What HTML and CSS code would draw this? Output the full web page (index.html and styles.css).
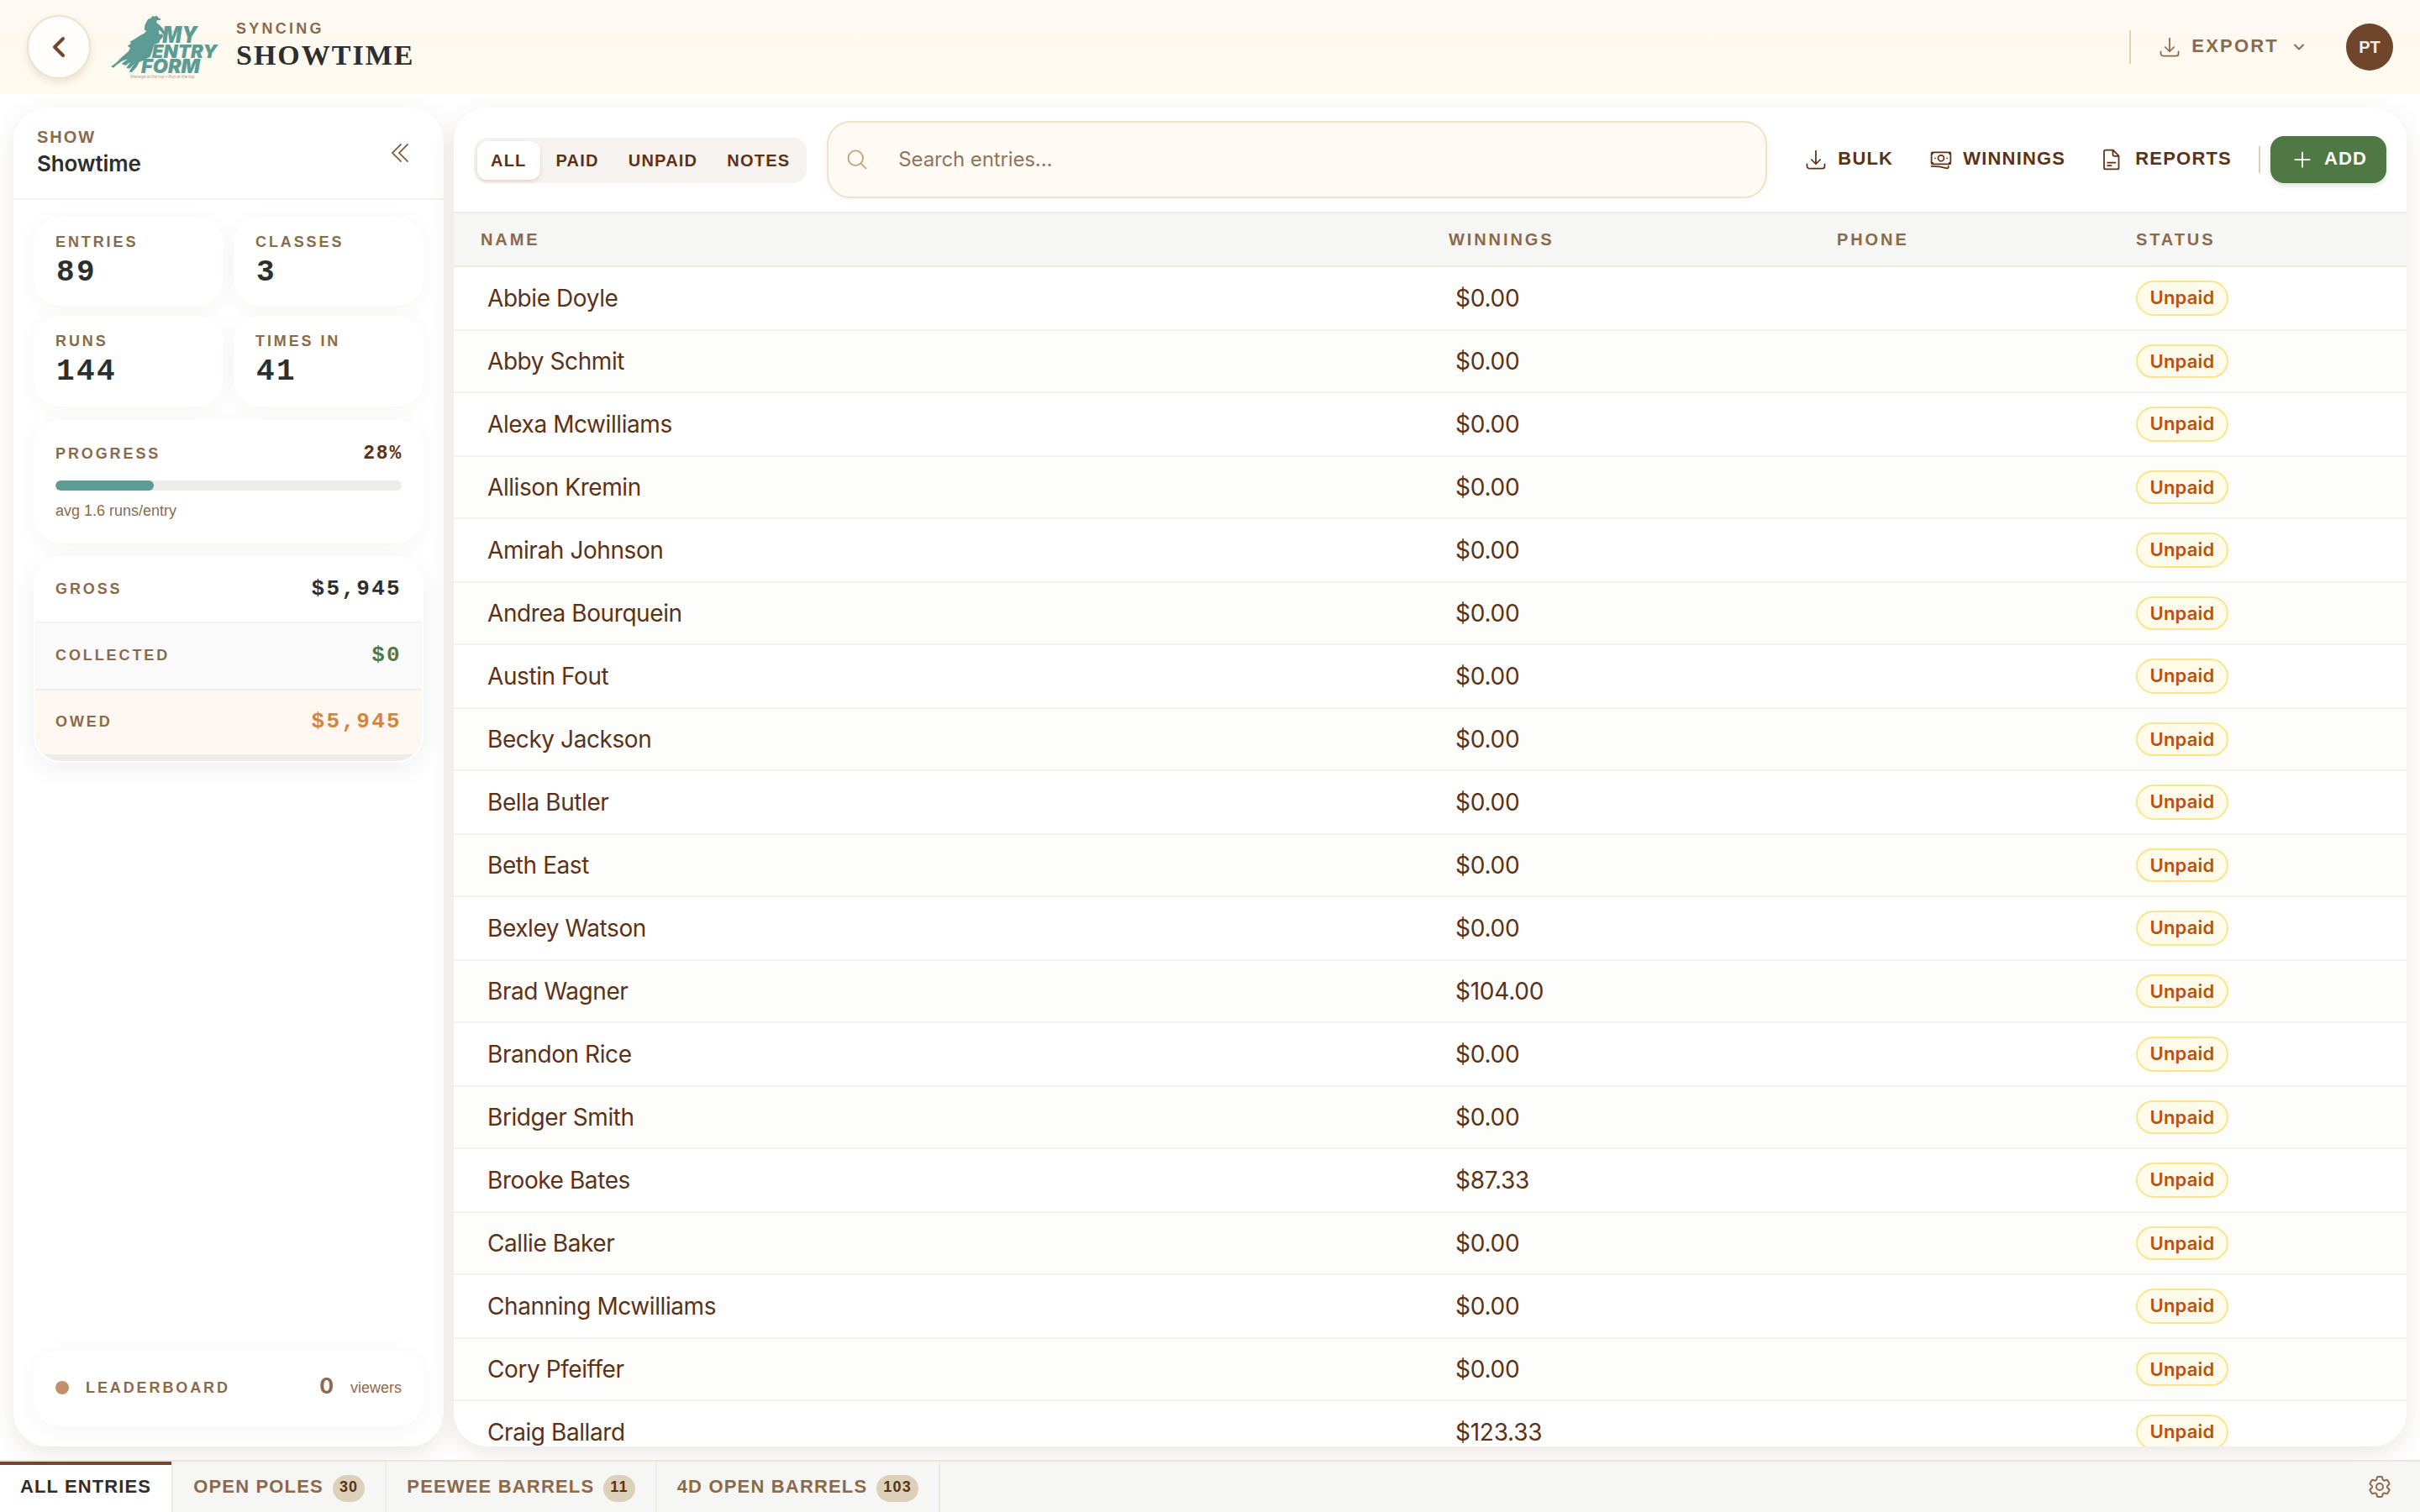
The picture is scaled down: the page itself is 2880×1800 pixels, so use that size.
FILE: index.html
```html
<!DOCTYPE html>
<html lang="en">
<head>
<meta charset="utf-8">
<title>Showtime</title>
<link rel="stylesheet" href="styles.css">
</head>
<body>
<header class="topbar">
  <button class="back"><svg class="icon i32 heavy" viewBox="0 0 24 24"><path d="M15.75 19.5 8.25 12l7.5-7.5"/></svg></button>
  <svg class="logo" viewBox="36 20 384 234">
    <path d="M178 34 184 26 191 28 200 25 206 33 215 37 211 41 200 42 199 50 210 59 221 70 230 88 226 96 214 81 207 76 209 92 218 90 224 98 212 112 208 122 190 128 184 150 180 162 176 172 160 180 150 186 137 191 128 208 110 228 101 225 112 207 120 196 102 214 91 211 106 190 88 203 74 197 96 180 76 187 58 199 45 211 36 207 54 194 74 174 88 162 99 152 105 140 95 133 108 124 104 118 122 108 140 96 157 87 163 78 155 76 157 60 163 46 168 38Z"/>
    <text x="220" y="123" font-size="81" textLength="124" lengthAdjust="spacingAndGlyphs">MY</text>
    <text x="182" y="175" font-size="65" textLength="234" lengthAdjust="spacingAndGlyphs">ENTRY</text>
    <text x="144" y="230" font-size="69" textLength="210" lengthAdjust="spacingAndGlyphs">FORM</text>
    <text class="tagline" x="105" y="249" font-size="15" textLength="230">Manage at the top • Run at the top</text>
  </svg>
  <div class="title">
    <div class="sync">SYNCING</div>
    <h1>SHOWTIME</h1>
  </div>
  <div class="account">
    <button class="export">
      <svg class="icon" viewBox="0 0 24 24"><path d="M3 16.5v2.25A2.25 2.25 0 0 0 5.25 21h13.5A2.25 2.25 0 0 0 21 18.75V16.5M16.5 12 12 16.5m0 0L7.5 12m4.5 4.500V3"/></svg>
      <span>EXPORT</span>
      <svg class="icon i16 heavy" viewBox="0 0 24 24"><path d="m19.5 8.250-7.5 7.500-7.500-7.500"/></svg>
    </button>
    <div class="avatar">PT</div>
  </div>
</header>

<div class="workspace">
  <aside class="sidebar">
    <div class="side-head">
      <div>
        <div class="eyebrow">SHOW</div>
        <div class="show-name">Showtime</div>
      </div>
      <svg class="icon i32 thin" viewBox="0 0 24 24"><path d="m18.750 19.500-7.500-7.500 7.500-7.500m-6 15L5.250 12l7.500-7.500"/></svg>
    </div>
    <div class="side-body">
      <div class="stats">
        <div class="card stat"><div class="label">ENTRIES</div><div class="num">89</div></div>
        <div class="card stat"><div class="label">CLASSES</div><div class="num">3</div></div>
        <div class="card stat"><div class="label">RUNS</div><div class="num">144</div></div>
        <div class="card stat"><div class="label">TIMES IN</div><div class="num">41</div></div>
      </div>
      <div class="card progress">
        <div class="progress-head"><span class="label">PROGRESS</span><span class="pct">28%</span></div>
        <div class="track"><div class="fill" style="width:28.5%"></div></div>
        <div class="note">avg 1.6 runs/entry</div>
      </div>
      <div class="card money">
        <div class="money-row"><span class="label">GROSS</span><span class="amount">$5,945</span></div>
        <div class="money-row collected"><span class="label">COLLECTED</span><span class="amount">$0</span></div>
        <div class="money-row owed"><span class="label">OWED</span><span class="amount">$5,945</span></div>
        <div class="strip"></div>
      </div>
      <div class="card leader">
        <span class="dot"></span><span class="label">LEADERBOARD</span><span class="count">0</span><span class="viewers">viewers</span>
      </div>
    </div>
  </aside>

  <main class="panel">
    <div class="toolbar">
      <div class="filters">
        <button class="filter on">ALL</button><button class="filter">PAID</button><button class="filter">UNPAID</button><button class="filter">NOTES</button>
      </div>
      <div class="search">
        <svg class="icon" viewBox="0 0 24 24"><path d="m21 21-5.197-5.197m0 0A7.500 7.500 0 1 0 5.196 5.196a7.500 7.500 0 0 0 10.607 10.607Z"/></svg>
        <span>Search entries...</span>
      </div>
      <div class="actions">
        <button class="action"><svg class="icon" viewBox="0 0 24 24"><path d="M3 16.5v2.25A2.25 2.25 0 0 0 5.25 21h13.5A2.25 2.25 0 0 0 21 18.75V16.5M16.5 12 12 16.5m0 0L7.5 12m4.500 4.500V3"/></svg><span>BULK</span></button>
        <button class="action"><svg class="icon" viewBox="0 0 24 24"><path d="M2.25 18.75a60.07 60.07 0 0 1 15.797 2.101c.727.198 1.453-.342 1.453-1.096V18.75M3.75 4.5v.75A.75.75 0 0 1 3 6h-.75m0 0v-.375c0-.621.504-1.125 1.125-1.125H20.25M2.25 6v9m18-10.5v.75c0 .414.336.75.75.75h.75m-1.5-1.5h.375c.621 0 1.125.504 1.125 1.125v9.75c0 .621-.504 1.125-1.125 1.125h-.375m1.5-1.5H21a.75.75 0 0 0-.75.75v.75m0 0H3.75m0 0h-.375a1.125 1.125 0 0 1-1.125-1.125V15m1.5 1.5v-.75A.75.75 0 0 0 3 15h-.75M15 10.5a3 3 0 1 1-6 0 3 3 0 0 1 6 0Zm3 0h.008v.008H18V10.5Zm-12 0h.008v.008H6V10.5Z"/></svg><span>WINNINGS</span></button>
        <button class="action"><svg class="icon px" viewBox="0 0 28 28"><path d="M13.800 2.600H4.700a1.700 1.700 0 0 0-1.700 1.700v19.400a1.700 1.700 0 0 0 1.700 1.700h14.100a1.700 1.700 0 0 0 1.700-1.700V9.600zM13.500 2.800v5.400a1.600 1.600 0 0 0 1.600 1.600h5.200M7.200 17.500h9.300M7.200 21.200h4.300"/></svg><span>REPORTS</span></button>
      </div>
      <div class="rule"></div>
      <button class="add"><svg class="icon" viewBox="0 0 24 24"><path d="M12 4.500v15m7.500-7.500h-15"/></svg><span>ADD</span></button>
    </div>
    <div class="thead cols"><span>NAME</span><span>WINNINGS</span><span>PHONE</span><span>STATUS</span></div>
    <div class="tbody">
      <div class="row cols"><span class="name">Abbie Doyle</span><span class="won">$0.00</span><span></span><span class="pill">Unpaid</span></div>
      <div class="row cols"><span class="name">Abby Schmit</span><span class="won">$0.00</span><span></span><span class="pill">Unpaid</span></div>
      <div class="row cols"><span class="name">Alexa Mcwilliams</span><span class="won">$0.00</span><span></span><span class="pill">Unpaid</span></div>
      <div class="row cols"><span class="name">Allison Kremin</span><span class="won">$0.00</span><span></span><span class="pill">Unpaid</span></div>
      <div class="row cols"><span class="name">Amirah Johnson</span><span class="won">$0.00</span><span></span><span class="pill">Unpaid</span></div>
      <div class="row cols"><span class="name">Andrea Bourquein</span><span class="won">$0.00</span><span></span><span class="pill">Unpaid</span></div>
      <div class="row cols"><span class="name">Austin Fout</span><span class="won">$0.00</span><span></span><span class="pill">Unpaid</span></div>
      <div class="row cols"><span class="name">Becky Jackson</span><span class="won">$0.00</span><span></span><span class="pill">Unpaid</span></div>
      <div class="row cols"><span class="name">Bella Butler</span><span class="won">$0.00</span><span></span><span class="pill">Unpaid</span></div>
      <div class="row cols"><span class="name">Beth East</span><span class="won">$0.00</span><span></span><span class="pill">Unpaid</span></div>
      <div class="row cols"><span class="name">Bexley Watson</span><span class="won">$0.00</span><span></span><span class="pill">Unpaid</span></div>
      <div class="row cols"><span class="name">Brad Wagner</span><span class="won">$104.00</span><span></span><span class="pill">Unpaid</span></div>
      <div class="row cols"><span class="name">Brandon Rice</span><span class="won">$0.00</span><span></span><span class="pill">Unpaid</span></div>
      <div class="row cols"><span class="name">Bridger Smith</span><span class="won">$0.00</span><span></span><span class="pill">Unpaid</span></div>
      <div class="row cols"><span class="name">Brooke Bates</span><span class="won">$87.33</span><span></span><span class="pill">Unpaid</span></div>
      <div class="row cols"><span class="name">Callie Baker</span><span class="won">$0.00</span><span></span><span class="pill">Unpaid</span></div>
      <div class="row cols"><span class="name">Channing Mcwilliams</span><span class="won">$0.00</span><span></span><span class="pill">Unpaid</span></div>
      <div class="row cols"><span class="name">Cory Pfeiffer</span><span class="won">$0.00</span><span></span><span class="pill">Unpaid</span></div>
      <div class="row cols"><span class="name">Craig Ballard</span><span class="won">$123.33</span><span></span><span class="pill">Unpaid</span></div>
    </div>
  </main>
</div>

<nav class="tabs">
  <a class="tab active">ALL ENTRIES</a>
  <a class="tab">OPEN POLES<span class="badge">30</span></a>
  <a class="tab">PEEWEE BARRELS<span class="badge">11</span></a>
  <a class="tab">4D OPEN BARRELS<span class="badge">103</span></a>
  <svg class="icon i32 gear" viewBox="0 0 24 24"><path d="M9.594 3.94c.09-.542.56-.94 1.11-.94h2.593c.55 0 1.02.398 1.11.94l.213 1.281c.063.374.313.686.645.87.074.04.147.083.22.127.325.196.72.257 1.075.124l1.217-.456a1.125 1.125 0 0 1 1.37.49l1.296 2.247a1.125 1.125 0 0 1-.26 1.431l-1.003.827c-.293.241-.438.613-.43.992a7.723 7.723 0 0 1 0 .255c-.008.378.137.75.43.991l1.004.827c.424.35.534.955.26 1.43l-1.298 2.247a1.125 1.125 0 0 1-1.369.491l-1.217-.456c-.355-.133-.75-.072-1.076.124a6.47 6.47 0 0 1-.22.128c-.331.183-.581.495-.644.869l-.213 1.281c-.09.543-.56.94-1.11.94h-2.594c-.55 0-1.019-.398-1.11-.94l-.213-1.281c-.062-.374-.312-.686-.644-.87a6.52 6.52 0 0 1-.22-.127c-.325-.196-.72-.257-1.076-.124l-1.217.456a1.125 1.125 0 0 1-1.369-.49l-1.297-2.247a1.125 1.125 0 0 1 .26-1.431l1.004-.827c.292-.24.437-.613.43-.991a6.932 6.932 0 0 1 0-.255c.007-.38-.138-.751-.43-.992l-1.004-.827a1.125 1.125 0 0 1-.26-1.43l1.297-2.247a1.125 1.125 0 0 1 1.37-.491l1.216.456c.356.133.751.072 1.076-.124.072-.044.146-.086.22-.128.332-.183.582-.495.644-.869l.214-1.28Z"/><path d="M15 12a3 3 0 1 1-6 0 3 3 0 0 1 6 0Z"/></svg>
</nav>
</body>
</html>
```
FILE: styles.css
```css
*{box-sizing:border-box}
:root{
  --sans:"Liberation Sans",Arial,sans-serif;
  --inter:Inter,sans-serif;
  --mono:"Liberation Mono",monospace;
  --tan:#8b6a4b;
  --brown:#5c3217;
  --saddle:#72462b;
  --ink:#2e2e2c;
  --teal:#5c9c95;
}
body{margin:0;height:1800px;display:flex;flex-direction:column;overflow:hidden;background:#fff;font-family:var(--sans);color:var(--ink)}
button{border:0;background:none;padding:0;margin:0;font:inherit;letter-spacing:inherit;color:inherit;display:flex;align-items:center}
h1{margin:0}
.icon{width:28px;height:28px;flex:none;fill:none;stroke:currentColor;stroke-width:1.5;stroke-linecap:round;stroke-linejoin:round}
.i32{width:32px;height:32px}
.i16{width:16px;height:16px}
.heavy{stroke-width:3}
.thin{stroke-width:1.4}
.px{stroke-width:1.75}

.topbar{flex:none;height:112px;padding:0 32px;display:flex;align-items:center;background:linear-gradient(#fef9f2,#fefaee)}
.back{width:76px;height:76px;border-radius:50%;border:2px solid #ede2cf;background:#fffefc;justify-content:center;color:var(--saddle);box-shadow:0 4px 10px rgba(80,60,30,.12)}
.logo{width:128px;height:78px;margin-left:24px;fill:var(--teal);font-family:Inter,sans-serif;font-weight:900;font-style:italic}
.logo .tagline{fill:#b3a58c;font-weight:400;font-style:normal}
.title{margin-left:21px;height:64px}
.sync{font-weight:700;font-size:18px;line-height:20px;letter-spacing:3.25px;color:var(--tan)}
.title h1{margin-top:2px;font:700 34px/40px "Liberation Serif",serif;letter-spacing:2px}
.account{margin-left:auto;display:flex;align-items:center}
.export{height:40px;border-left:2px solid #ddd2ba;padding-left:32px;color:var(--tan);font-weight:700;font-size:22px;letter-spacing:2.2px}
.export span{margin:0 16px 0 12px;padding-bottom:3px}
.avatar{width:56px;height:56px;margin-left:48px;border-radius:50%;background:#6f452b;color:#f8eee0;font-weight:700;font-size:20px;display:flex;align-items:center;justify-content:center}

.workspace{flex:1;min-height:0;padding:16px;display:flex;gap:12px}
.sidebar,.panel{border-radius:40px;background:#fff;box-shadow:0 8px 28px rgba(85,60,35,.12);display:flex;flex-direction:column}
.sidebar{width:512px;flex:none}
.side-head{height:110px;flex:none;padding:23px 36px 0 28px;border-bottom:2px solid #f5f1ee;display:flex;justify-content:space-between;color:var(--tan)}
.side-head .icon{margin-top:15px}
.eyebrow{font-weight:700;font-size:20px;line-height:24px;letter-spacing:2px}
.show-name{margin-top:4px;font:600 26px/32px var(--inter);letter-spacing:-.15px;color:var(--ink)}
.side-body{flex:1;padding:20px 24px 24px;display:flex;flex-direction:column;gap:16px}
.card{border-radius:32px;border:2px solid #fff;background:#fff;box-shadow:0 4px 24px rgba(70,55,40,.05)}
.label{font-weight:700;font-size:18px;line-height:22px;letter-spacing:2.9px;color:var(--tan)}
.stats{display:grid;grid-template-columns:1fr 1fr;grid-template-rows:106px 108px;gap:12px}
.stat{padding:17px 24px}
.num{margin:6px 0 0 1px;font:700 36px/40px var(--mono);letter-spacing:2.4px}
.progress{height:146px;padding:26px 24px 22px}
.progress-head{height:24px;display:flex;justify-content:space-between;align-items:baseline}
.pct{font:700 23px/24px var(--mono);letter-spacing:1.8px;margin-right:-1px;color:var(--brown)}
.track{height:12px;margin-top:20px;border-radius:6px;background:#efebe7;overflow:hidden}
.fill{height:100%;border-radius:6px;background:var(--teal)}
.note{margin-top:13px;font-size:18px;line-height:22px;color:var(--tan)}
.money{overflow:hidden;height:246px;box-shadow:0 8px 28px rgba(70,55,40,.08)}
.money-row{height:78px;padding:0 24px 2px;border-bottom:2px solid #f5f1ee;display:flex;justify-content:space-between;align-items:center}
.amount{font:700 26px/30px var(--mono);letter-spacing:2.3px}
.collected{height:80px;background:#fafafa;border-color:#efebe7}
.collected .amount{color:#507844}
.owed{height:76px;border:0;padding-bottom:3px;background:#fff8f0}
.owed .amount{color:#d4843c}
.strip{height:8px;background:#eeeae6}
.leader{margin-top:auto;height:90px;padding:0 24px 2px;display:flex;align-items:center}
.dot{width:16px;height:16px;border-radius:50%;background:#c4906c;margin-right:20px}
.count{margin-left:auto;font:700 25px/28px var(--inter);color:var(--tan);margin-bottom:4px}
.viewers{margin-left:20px;font-size:18px;color:var(--tan)}

.panel{flex:1;min-width:0;overflow:hidden}
.toolbar{flex:none;height:126px;padding:0 24px;border-bottom:2px solid #efe9e3;display:flex;align-items:center;font-weight:700}
.filters{height:54px;margin-top:2px;padding:4px;border-radius:16px;background:#f6f2ef;display:flex;gap:3px;font-size:20px;letter-spacing:1.22px;color:var(--brown)}
.filter{padding:0 16px;border-radius:12px}
.filter.on{background:#fff;box-shadow:0 2px 4px rgba(90,60,20,.16)}
.search{flex:1;height:92px;margin:0 24px;padding:0 20px;border:2px solid #eee2c8;border-radius:28px;background:#fffaf3;display:flex;align-items:center;gap:35px;font:400 24px/30px var(--inter);letter-spacing:-.12px;color:#92745a;box-shadow:0 2px 6px rgba(90,60,30,.05)}
.search .icon{color:#c0a07c}
.actions{display:flex;gap:43px;padding-left:20px;font-size:22px;letter-spacing:1.2px;color:var(--brown)}
.action,.add{gap:12px}
.action span,.add span{padding-bottom:3px}
.rule{width:2px;height:32px;margin:0 12px 0 32px;background:#ddd0b8}
.add{width:138px;height:56px;padding-left:24px;border-radius:16px;background:#507844;color:#fff;font-size:22px;letter-spacing:1.1px;box-shadow:0 3px 6px rgba(60,60,30,.15)}
.cols{display:grid;grid-template-columns:1152px 462px 356px 1fr;padding-left:32px;align-items:center}
.thead{flex:none;height:64px;background:#f6f6f4;border-bottom:2px solid #efe9e1;font-weight:700;font-size:20px;letter-spacing:2.9px;color:var(--tan)}
.row{height:76px;border-bottom:2px solid #f5f1ee;font:400 28px/34px var(--inter);color:var(--brown)}
.row:nth-child(even){height:74px;background:#fdfdfb}
.name{padding-left:8px;letter-spacing:-.42px}
.won{padding-left:8px;letter-spacing:-.25px}
.pill{height:42px;width:110px;border:2px solid #fbe489;border-radius:21px;background:#fffbeb;color:#b95110;font-weight:600;font-size:22px;letter-spacing:.2px;line-height:37px;text-align:center}
.row:nth-child(even) .pill{height:40px}

.tabs{flex:none;height:62px;border-top:2px solid #ede5da;background:#f6f6f4;display:flex;align-items:stretch;font-weight:700;font-size:22px;letter-spacing:1.17px;color:var(--tan)}
.tab{display:flex;align-items:center;padding:0 24px;border-right:2px solid #efe9e0}
.tab.active{background:#fff;color:var(--ink);letter-spacing:1.12px;box-shadow:inset 0 4px 0 #73452b}
.badge{height:32px;margin:4px 0 0 11px;padding:0 8px;border-radius:16px;background:#ddd0b8;color:var(--brown);font-size:18px;line-height:29px;letter-spacing:1.2px}
.gear{margin:14px 32px 0 auto}
```
